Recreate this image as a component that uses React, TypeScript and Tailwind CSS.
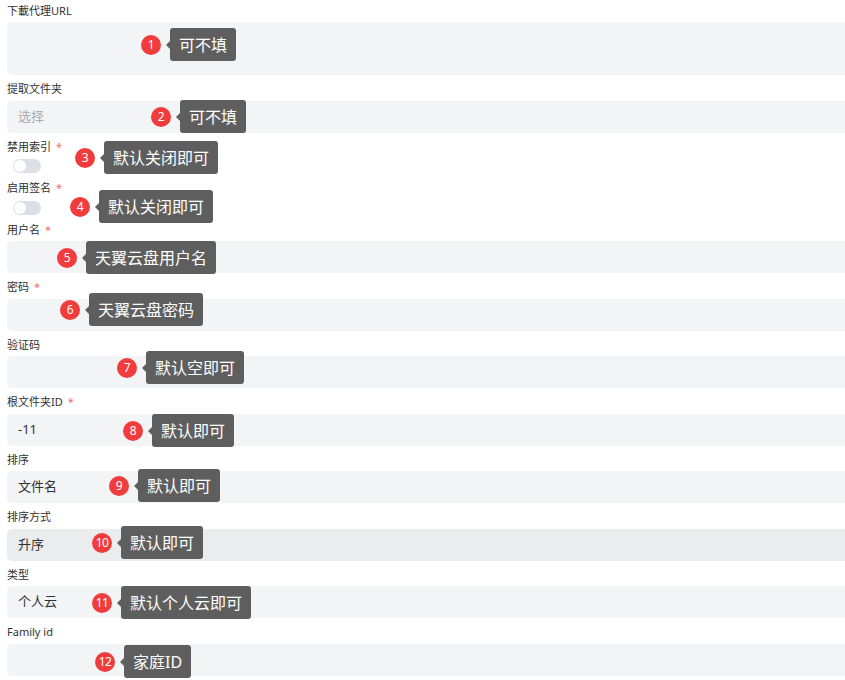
import React from "react";

type Field = {
  label: string;
  required?: boolean;
  kind: "input" | "textarea" | "switch";
  value?: string;
  placeholder?: string;
  hover?: boolean;
};

const fields: Field[] = [
  { label: "下載代理URL", kind: "textarea" },
  { label: "提取文件夹", kind: "input", placeholder: "选择" },
  { label: "禁用索引", required: true, kind: "switch" },
  { label: "启用签名", required: true, kind: "switch" },
  { label: "用户名", required: true, kind: "input" },
  { label: "密码", required: true, kind: "input" },
  { label: "验证码", kind: "input" },
  { label: "根文件夹ID", required: true, kind: "input", value: "-11" },
  { label: "排序", kind: "input", value: "文件名" },
  { label: "排序方式", kind: "input", value: "升序", hover: true },
  { label: "类型", kind: "input", value: "个人云" },
  { label: "Family id", kind: "input" },
];

// callouts drawn over the form
const notes = [
  { n: "1", text: "可不填", pos: "left-[141px] top-[28px]" },
  { n: "2", text: "可不填", pos: "left-[151px] top-[100px]" },
  { n: "3", text: "默认关闭即可", pos: "left-[75px] top-[141px]" },
  { n: "4", text: "默认关闭即可", pos: "left-[70px] top-[190px]" },
  { n: "5", text: "天翼云盘用户名", pos: "left-[57px] top-[241px]" },
  { n: "6", text: "天翼云盘密码", pos: "left-[60px] top-[293px]" },
  { n: "7", text: "默认空即可", pos: "left-[117px] top-[351px]" },
  { n: "8", text: "默认即可", pos: "left-[123px] top-[414px]" },
  { n: "9", text: "默认即可", pos: "left-[109px] top-[469px]" },
  { n: "10", text: "默认即可", pos: "left-[92px] top-[526px]" },
  { n: "11", text: "默认个人云即可", pos: "left-[92px] top-[586px]" },
  { n: "12", text: "家庭ID", pos: "left-[95px] top-[645px]" },
];

function Note({ n, text, pos }: { n: string; text: string; pos: string }) {
  return (
    <div className={`absolute ${pos} flex h-[33px] items-center`}>
      <span className="flex h-5 w-5 items-center justify-center rounded-full bg-[#f03c3c] text-[12px] leading-none tracking-[-0.5px] text-white">
        {n}
      </span>
      <span className="ml-[5px] h-0 w-0 border-y-[4px] border-r-[4px] border-y-transparent border-r-[#5e5e5e]" />
      <span className="flex h-[33px] items-center rounded-[3px] bg-[#5e5e5e] px-[9px] text-[16px] text-white">
        {text}
      </span>
    </div>
  );
}

export default function App() {
  return (
    <div
      className="relative h-[680px] w-full overflow-hidden bg-white pl-[7px] pt-[3px] text-[#303133]"
      style={{ fontFamily: '"Noto Sans", "Noto Sans CJK SC", sans-serif' }}
    >
      <div className="flex flex-col gap-[6.5px]">
        {fields.map((f, i) => (
          <div key={i} className="flex flex-col">
            <div className="mb-[3px] flex h-4 items-center text-[11px]">
              {f.label}
              {f.required && <span className="ml-[5px] text-[#f56c6c]">*</span>}
            </div>
            {f.kind === "switch" ? (
              <div className="flex h-4 items-center pl-[6px]">
                <div className="relative h-[14px] w-[28px] rounded-full bg-[#dcdfe6]">
                  <div className="absolute left-[1px] top-[1px] h-3 w-3 rounded-full bg-white" />
                </div>
              </div>
            ) : (
              <div
                className={`mr-[-20px] flex items-center rounded-l-[5px] px-[11px] text-[13px] ${
                  f.kind === "textarea" ? "h-[53px]" : "h-8"
                } ${f.hover ? "bg-[#ebecee]" : "bg-[#f3f4f6]"}`}
              >
                {f.value ? (
                  <span className="text-[#303133]">{f.value}</span>
                ) : (
                  <span className="text-[#a8abb2]">{f.placeholder}</span>
                )}
              </div>
            )}
          </div>
        ))}
      </div>

      {notes.map((x) => (
        <Note key={x.n} {...x} />
      ))}
    </div>
  );
}
